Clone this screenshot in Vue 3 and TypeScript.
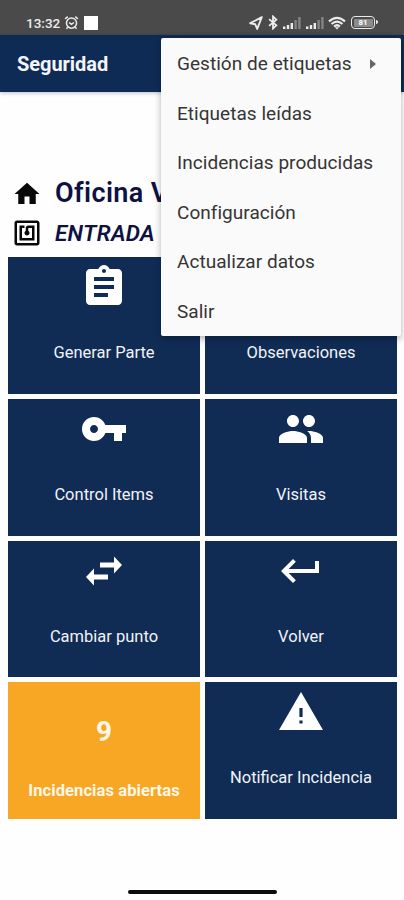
<script setup lang="ts">
interface Tile {
  label: string
  icon?: string
  count?: number
}

const menuItems: { label: string; submenu?: boolean }[] = [
  { label: 'Gestión de etiquetas', submenu: true },
  { label: 'Etiquetas leídas' },
  { label: 'Incidencias producidas' },
  { label: 'Configuración' },
  { label: 'Actualizar datos' },
  { label: 'Salir' },
]

const tiles: Tile[] = [
  {
    label: 'Generar Parte',
    icon: 'M19 3h-4.18C14.4 1.84 13.3 1 12 1s-2.4.84-2.82 2H5c-1.1 0-2 .9-2 2v14c0 1.1.9 2 2 2h14c1.1 0 2-.9 2-2V5c0-1.1-.9-2-2-2zm-7 0c.55 0 1 .45 1 1s-.45 1-1 1-1-.45-1-1 .45-1 1-1zm2 14H7v-2h7v2zm3-4H7v-2h10v2zm0-4H7V7h10v2z',
  },
  {
    label: 'Observaciones',
    icon: 'M3 18h12v-2H3v2zM3 6v2h18V6H3zm0 7h18v-2H3v2z',
  },
  {
    label: 'Control Items',
    icon: 'M12.65 10C11.83 7.67 9.61 6 7 6c-3.31 0-6 2.69-6 6s2.69 6 6 6c2.61 0 4.83-1.67 5.65-4H17v4h4v-4h2v-4H12.65zM7 14c-1.1 0-2-.9-2-2s.9-2 2-2 2 .9 2 2-.9 2-2 2z',
  },
  {
    label: 'Visitas',
    icon: 'M16 11c1.66 0 2.99-1.34 2.99-3S17.66 5 16 5s-3 1.34-3 3 1.34 3 3 3zm-8 0c1.66 0 2.99-1.34 2.99-3S9.66 5 8 5 5 6.34 5 8s1.34 3 3 3zm0 2c-2.33 0-7 1.17-7 3.5V19h14v-2.5C15 14.17 10.33 13 8 13zm8 0c-.29 0-.62.02-.97.05 1.16.84 1.97 1.97 1.97 3.45V19h6v-2.5c0-2.33-4.67-3.5-7-3.5z',
  },
  {
    label: 'Cambiar punto',
    icon: 'M6.99 10.8L3 15l3.99 4.2v-2.9H14v-2.6H6.99v-2.9zM21 9l-3.99-4.2v2.9H10v2.6h7.01v2.9L21 9z',
  },
  {
    label: 'Volver',
    icon: 'M19 7v4H5.83l3.58-3.59L8 6l-6 6 6 6 1.41-1.41L5.83 13H21V7z',
  },
  { label: 'Incidencias abiertas', count: 9 },
  {
    label: 'Notificar Incidencia',
    icon: 'M1 21h22L12 2 1 21zm11.8-3.2h-1.6v-1.6h1.6v1.6zm0-3.3h-1.6V10h1.6v4.5z',
  },
]
</script>

<template>
  <div class="screen">
    <header class="status">
      <span class="clock">13:32</span>
      <svg class="alarm" viewBox="0 0 16 16" fill="none" stroke="#ececec" stroke-width="1.6">
        <circle cx="8" cy="8.6" r="5.4" />
        <path d="M1.2 4.2 4 1.8M14.8 4.2 12 1.8M5.4 8l2.6 2 2.6-2M4 13l-1.4 1.6M12 13l1.4 1.6" />
      </svg>
      <span class="square"></span>
      <span class="spacer"></span>
      <svg class="nav" viewBox="0 0 14 14" fill="none" stroke="#ececec" stroke-width="1.9" stroke-linejoin="round">
        <path d="M12.8 1.2 1.2 7.2l5 1 2 4.8z" />
      </svg>
      <svg class="bt" viewBox="0 0 12 16" fill="none" stroke="#ececec" stroke-width="1.9">
        <path d="M1.8 4.4 9.6 11 6 14.4V1.6L9.6 5 1.8 11.6" />
      </svg>
      <svg v-for="n in 2" :key="n" class="signal" viewBox="0 0 20 13">
        <path d="M1 10.5h2.4V13H1zM4.8 9h2.4v4H4.8zM8.6 7H11v6H8.6z" fill="#ececec" />
        <path d="M12.4 4h2.4v9h-2.4zM16.2 1h2.4v12h-2.4z" fill="#858585" />
      </svg>
      <svg class="wifi" viewBox="0 0 18 14" fill="none" stroke="#ececec" stroke-width="2.2">
        <path d="M1 5.3Q9-1.7 17 5.3M3.5 8Q9 3.2 14.5 8M6 10.5Q9 8 12 10.5" />
        <path d="M9 13.6 6.8 11.2h4.4z" fill="#ececec" stroke="none" />
      </svg>
      <span class="battery"><span class="level">81</span></span>
    </header>

    <div class="appbar"><h1>Seguridad</h1></div>

    <main>
      <section class="place">
        <svg viewBox="0 0 24 24"><path d="M10 20v-6h4v6h5v-8h3L12 3 2 12h3v8z" /></svg>
        <h2>Oficina V</h2>
      </section>
      <section class="point">
        <svg viewBox="0 0 24 24"><path d="M20 2H4c-1.1 0-2 .9-2 2v16c0 1.1.9 2 2 2h16c1.1 0 2-.9 2-2V4c0-1.1-.9-2-2-2zm0 18H4V4h16v16zM18 6h-5c-1.1 0-2 .9-2 2v2.28c-.6.35-1 .98-1 1.72 0 1.1.9 2 2 2s2-.9 2-2c0-.74-.4-1.38-1-1.72V8h3v8H8V8h2V6H6v12h12V6z" /></svg>
        <h3>ENTRADA</h3>
      </section>
      <section class="grid">
        <button
          v-for="tile in tiles"
          :key="tile.label"
          type="button"
          class="tile"
          :class="{ alert: tile.count !== undefined }"
        >
          <svg v-if="tile.icon" class="icon" viewBox="0 0 24 24"><path :d="tile.icon" /></svg>
          <span v-else class="count">{{ tile.count }}</span>
          <span class="label">{{ tile.label }}</span>
        </button>
      </section>
    </main>

    <div class="home-bar"></div>

    <nav class="menu">
      <div v-for="item in menuItems" :key="item.label" class="item">
        <span>{{ item.label }}</span>
        <i v-if="item.submenu" class="arrow"></i>
      </div>
    </nav>
  </div>
</template>

<style>
body {
  margin: 0;
  background: #fefefe;
}
</style>

<style scoped>
* {
  box-sizing: border-box;
}
.screen {
  position: relative;
  display: flex;
  flex-direction: column;
  width: 404px;
  height: 900px;
  overflow: hidden;
  background: #fefefe;
  font-family: Roboto, 'Liberation Sans', sans-serif;
}
.status {
  display: flex;
  align-items: center;
  height: 35px;
  padding: 10px 29px 0 26px;
  background: #4a4a4b;
  color: #ececec;
}
.clock {
  width: 38px;
  font-size: 13.5px;
  font-weight: 500;
}
.alarm {
  width: 15px;
  height: 15px;
}
.square {
  width: 14px;
  height: 14px;
  margin-left: 5px;
  background: #fff;
}
.spacer {
  flex: 1;
}
.nav {
  width: 14px;
  height: 14px;
  margin-right: 4px;
}
.bt {
  width: 12px;
  height: 15px;
  margin-right: 3px;
}
.signal {
  width: 20px;
  height: 13px;
  margin-right: 2.5px;
}
.wifi {
  width: 18px;
  height: 14px;
  margin: 0 5px 0 1px;
}
.battery {
  position: relative;
  display: flex;
  width: 24px;
  height: 13px;
  padding: 1.5px;
  border: 1.5px solid #ececec;
  border-radius: 4px;
}
.battery::after {
  content: '';
  position: absolute;
  right: -4px;
  top: 3px;
  width: 2.5px;
  height: 4px;
  border-radius: 0 2px 2px 0;
  background: #ececec;
}
.level {
  flex: 1;
  border-radius: 1px;
  background: #8b8b8b;
  color: #fff;
  font-size: 8px;
  font-weight: 700;
  line-height: 7.5px;
  text-align: center;
}
.appbar {
  display: flex;
  align-items: center;
  height: 57px;
  padding: 1px 0 0 17px;
  background: #0e2b55;
  box-shadow: 0 1px 4px rgba(0, 0, 30, 0.25);
}
h1,
h2,
h3 {
  margin: 0;
  white-space: nowrap;
}
h1 {
  color: #f4f5f8;
  font-size: 20px;
  font-weight: 700;
  letter-spacing: -0.05px;
}
main {
  display: flex;
  flex-direction: column;
  padding: 81px 7px 0 8px;
}
.place,
.point {
  display: flex;
  align-items: center;
  height: 40px;
  padding-left: 4px;
  color: #0d1144;
}
.place svg,
.point svg {
  width: 30px;
  height: 30px;
  margin-right: 13px;
  fill: #080808;
}
.place svg {
  position: relative;
  top: 1px;
}
.point {
  height: 40px;
  margin-bottom: 4px;
}
h2 {
  font-size: 27px;
  font-weight: 600;
  letter-spacing: 0.4px;
}
h3 {
  font-size: 22.5px;
  font-weight: 600;
  font-style: italic;
  letter-spacing: 0.3px;
}
.grid {
  display: grid;
  grid-template-columns: 192px 192px;
  grid-auto-rows: 136.8px;
  gap: 5px;
}
.tile {
  display: flex;
  flex-direction: column;
  align-items: center;
  padding: 6px 0 0;
  border: 0;
  background: #102c55;
  color: #f1f3f7;
  font-family: inherit;
  font-size: 16.5px;
}
.icon {
  width: 48px;
  height: 48px;
  fill: #fff;
}
.label {
  margin-top: 31px;
  line-height: 22px;
  font-weight: 450;
  white-space: nowrap;
}
.tile.alert {
  padding-top: 33px;
  background: #f8a724;
  color: #fff8e8;
}
.count {
  font-size: 28px;
  font-weight: 700;
  line-height: 34px;
}
.alert .label {
  font-weight: 700;
  letter-spacing: 0.1px;
}
.home-bar {
  width: 149px;
  height: 3.5px;
  margin: 71px auto 0;
  border-radius: 2px;
  background: #0c0c0c;
}
.menu {
  position: absolute;
  top: 38px;
  left: 161px;
  width: 240px;
  height: 298px;
  padding-top: 1px;
  border-radius: 2px;
  background: #fafafa;
  box-shadow: 0 3px 7px rgba(0, 0, 0, 0.3);
  color: #353535;
  font-size: 19px;
  letter-spacing: 0.04px;
}
.item {
  display: flex;
  align-items: center;
  justify-content: space-between;
  height: 49.5px;
  padding: 0 25px 0 16px;
  white-space: nowrap;
}
.arrow {
  border: 5px solid transparent;
  border-left: 6px solid #666;
  border-right: 0;
}
</style>
